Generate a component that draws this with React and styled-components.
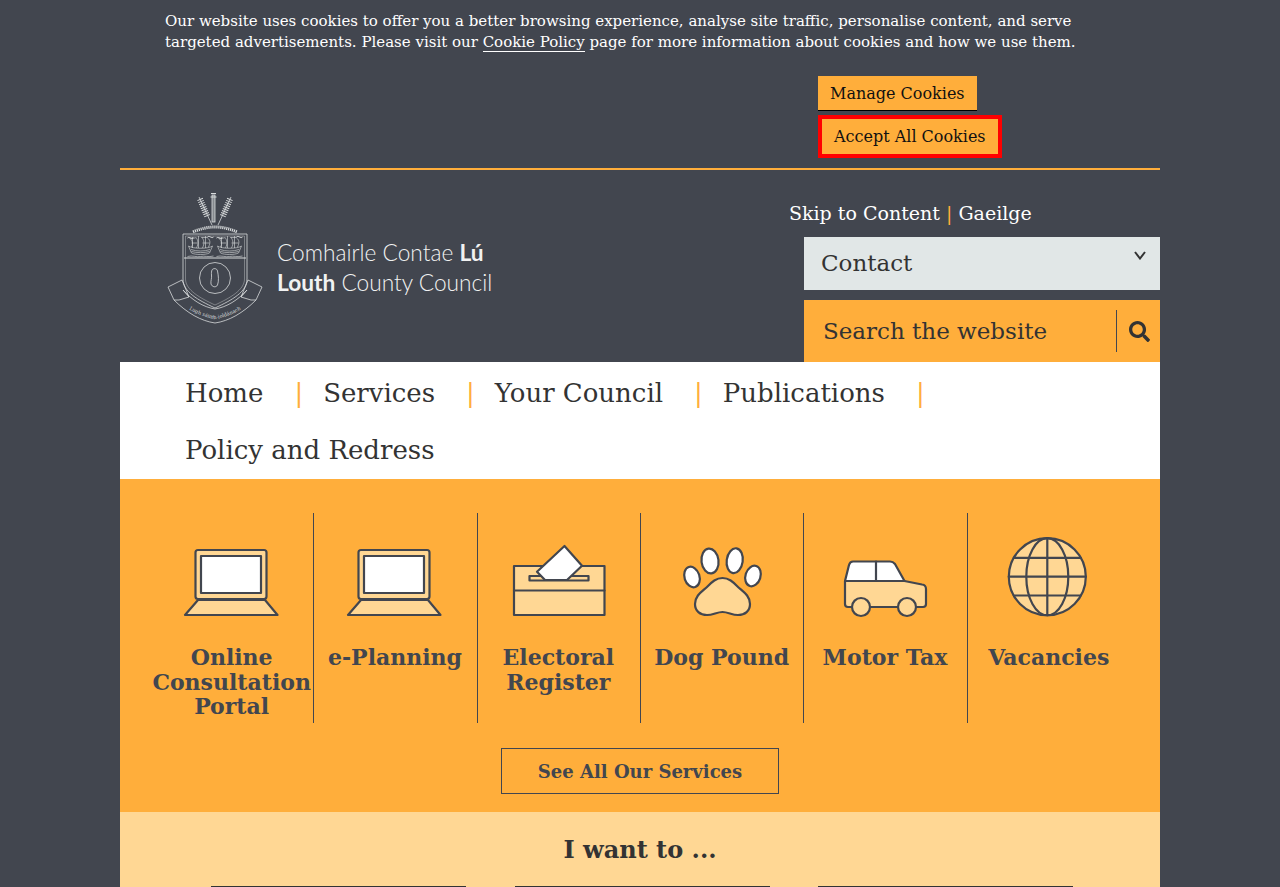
import React from "react";
import styled, { createGlobalStyle } from "styled-components";
import { FaSearch } from "react-icons/fa";

const DARK = "#42464f";
const ORANGE = "#ffae3b";
const LIGHT = "#ffd794";
const INK = "#333333";

const Global = createGlobalStyle`
  html, body { margin: 0; padding: 0; background: ${DARK}; }
  body { font-family: "DejaVu Serif", "Liberation Serif", serif; color: ${INK}; }
  * { box-sizing: border-box; }
`;

const Page = styled.div`
  width: 1040px;
  margin: 0 auto;
  height: 887px;
  overflow: hidden;
`;

const CookieBanner = styled.section`
  height: 170px;
  padding: 11px 0 0 45px;
  border-bottom: 2px solid ${ORANGE};
  color: #ffffff;
  font-size: 15px;
  line-height: 21px;
`;
const CookieText = styled.p`
  width: 925px;
  margin: 0;
`;
const CookieLink = styled.a`
  color: #ffffff;
  border-bottom: 1px solid #ffffff;
`;
const CookieActions = styled.div`
  display: flex;
  flex-direction: column;
  align-items: flex-start;
  gap: 4px;
  margin: 23px 0 0 653px;
`;
const CookieButton = styled.button`
  font-family: inherit;
  font-size: 16px;
  line-height: 19px;
  color: #111111;
  background: ${ORANGE};
  border: 0;
  border-bottom: 1px solid #000000;
  padding: 8px 12px 7px;
`;
const AcceptButton = styled(CookieButton)`
  border: 4px solid #ff0000;
  padding: 8px 12px;
  height: 43px;
`;

const Header = styled.header`
  height: 192px;
  display: flex;
  justify-content: space-between;
`;
const Logo = styled.a`
  display: flex;
  align-items: flex-start;
  padding: 20px 0 0 45px;
  color: #f1f2f2;
`;
const Wordmark = styled.div`
  margin: 48px 0 0 12px;
  font-family: "Lato", "Open Sans", sans-serif;
  font-weight: 300;
  font-size: 22.7px;
  line-height: 29.500px;
  white-space: nowrap;
  b { font-weight: 700; }
`;
const HeaderTools = styled.div`
  width: 371px;
  display: flex;
  flex-direction: column;
`;
const SkipRow = styled.div`
  height: 67px;
  padding-top: 30px;
  font-size: 19px;
  line-height: 26px;
  color: #ffffff;
  white-space: nowrap;
`;
const Pipe = styled.span`
  color: ${ORANGE};
  font-weight: 300;
`;
const ContactSelect = styled.div`
  align-self: flex-end;
  width: 356px;
  height: 53px;
  background: #e1e7e7;
  padding: 0 14px 0 17px;
  display: flex;
  justify-content: space-between;
  font-size: 23px;
  line-height: 53px;
  color: ${INK};
`;
const Caret = styled.svg`
  width: 12px;
  height: 9px;
  margin-top: 14px;
`;
const SearchBar = styled.div`
  align-self: flex-end;
  width: 356px;
  height: 62px;
  margin-top: 10px;
  background: ${ORANGE};
  display: flex;
  align-items: center;
  padding-left: 19px;
  font-size: 23px;
  line-height: 64px;
  color: ${INK};
`;
const SearchPlaceholder = styled.span`
  flex: 1;
`;
const SearchIconBox = styled.span`
  width: 44px;
  height: 42px;
  padding-left: 2px;
  border-left: 1px solid ${DARK};
  display: flex;
  align-items: center;
  justify-content: center;
  color: ${INK};
  font-size: 21px;
`;

const Nav = styled.nav`
  height: 117px;
  background: #ffffff;
  padding: 3px 0 0 65px;
  display: flex;
  flex-wrap: wrap;
  align-content: flex-start;
  font-size: 26px;
  line-height: 57px;
  color: ${INK};
`;
const NavItem = styled.a`
  display: flex;
  white-space: nowrap;
`;
const NavPipe = styled.span`
  color: ${ORANGE};
  margin: 0 20px 0 31px;
`;

const Services = styled.section`
  height: 333px;
  background: ${ORANGE};
  padding: 34px 29px 0 31px;
`;
const ServiceGrid = styled.div`
  display: grid;
  grid-template-columns: repeat(6, minmax(0, 1fr));
`;
const ServiceCard = styled.a`
  height: 210px;
  padding-top: 20px;
  display: flex;
  flex-direction: column;
  align-items: center;
  border-right: ${(p) => (p.$last ? "0" : `1px solid ${DARK}`)};
`;
const ServiceIcon = styled.svg`
  width: 100px;
  height: 90px;
  flex: none;
`;
const ServiceLabel = styled.h3`
  margin: 22px 1px 0 0;
  font-size: 22px;
  line-height: 24.5px;
  font-weight: 700;
  text-align: center;
  color: ${DARK};
`;
const AllServices = styled.a`
  display: block;
  width: 278px;
  height: 46px;
  margin: 25px 0 0 350px;
  border: 1px solid ${DARK};
  text-align: center;
  font-size: 18px;
  font-weight: 700;
  line-height: 45px;
  color: ${DARK};
`;

const Wants = styled.section`
  height: 75px;
  background: ${LIGHT};
  padding-top: 19px;
  text-align: center;
`;
const WantsTitle = styled.h2`
  margin: 0;
  height: 55px;
  font-size: 24px;
  line-height: 38px;
  font-weight: 700;
  color: ${INK};
`;
const WantsRow = styled.div`
  display: flex;
  justify-content: flex-start;
  gap: 48.500px;
  padding-left: 91px;
`;
const WantsCard = styled.div`
  width: 255px;
  height: 1px;
  background: ${INK};
`;

const S = { stroke: DARK, strokeWidth: 2.2, strokeLinejoin: "round", strokeLinecap: "round" };

const Laptop = () => (
  <ServiceIcon viewBox="0 0 100 90">
    <g {...S}>
      <path d="M16 67H83L95.500 82H3Z" fill={LIGHT} />
      <rect x="13.500" y="17" width="71" height="49" rx="2.500" fill={LIGHT} />
      <rect x="19" y="23" width="60" height="37" fill="#fff" />
    </g>
  </ServiceIcon>
);
const Ballot = () => (
  <ServiceIcon viewBox="0 0 100 90">
    <g {...S}>
      <rect x="5" y="33" width="90.500" height="49" fill={LIGHT} />
      <path d="M5 57.500H95.500" />
      <rect x="20.500" y="43" width="59" height="4.500" fill={LIGHT} />
      <path d="M55.500 13L73 32.700L58 47H36L28 38.700Z" fill="#fff" />
    </g>
  </ServiceIcon>
);
const Paw = () => (
  <ServiceIcon viewBox="0 0 100 90">
    <g {...S}>
      <ellipse cx="20" cy="44" rx="7.500" ry="10.500" transform="rotate(-18 20 44)" fill="#fff" />
      <ellipse cx="38" cy="28" rx="8.500" ry="12.500" transform="rotate(-7 38 28)" fill="#fff" />
      <ellipse cx="62.700" cy="27.700" rx="8" ry="12.500" transform="rotate(8 62.700 27.700)" fill="#fff" />
      <ellipse cx="81" cy="43" rx="7.500" ry="10.500" transform="rotate(18 81 43)" fill="#fff" />
      <path d="M50.500 45C44 45 40 49 36 53C31 58 23 62 23 71C23 78 28 82 35 82C41 82 45 79 50.500 79C56 79 60 82 66 82C73 82 78 78 78 71C78 62 70 58 65 53C61 49 57 45 50.500 45Z" fill={LIGHT} />
    </g>
  </ServiceIcon>
);
const Car = () => (
  <ServiceIcon viewBox="0 0 100 90">
    <g {...S}>
      <path d="M10 48V71Q10 74 13 74H88Q91 74 91 71V56Q91 52 87 51.500L69.500 48Z" fill={LIGHT} />
      <path d="M10 48L14 32Q15 28.500 18 28.500H55Q58 28.500 60 31L69.500 48Z" fill="#fff" />
      <path d="M41 28.500V48" />
      <circle cx="26" cy="74" r="9" fill={LIGHT} />
      <circle cx="72" cy="74" r="9" fill={LIGHT} />
    </g>
  </ServiceIcon>
);
const Globe = () => (
  <ServiceIcon viewBox="0 0 100 90">
    <g {...S}>
      <circle cx="48.300" cy="43.700" r="38.500" fill={LIGHT} />
      <ellipse cx="48.300" cy="43.700" rx="21" ry="38.500" fill="none" />
      <path d="M48.300 5.200V82.200M9.800 43.700H86.800M14.800 24.900H81.800M14.800 62.500H81.800" fill="none" />
    </g>
  </ServiceIcon>
);

const Ship = ({ x }) => (
  <g transform={`translate(${x} 0)`} strokeWidth=".6">
    <path d="M-12 246C-8 249 8 249 12 246L9 253C5 255 -5 255 -9 253Z" />
    <path d="M-9.500 249.500C-4 251.500 4 251.500 9.500 249.500M-9 251.500C-4 253 4 253 9 251.500" />
    <path d="M-11 238C-8 240 -7 244 -9 247M-5 237C-2 240 -2 244 -4 248M1 237C4 240 4 244 2 248M7 238C10 240 10 243 8 247" />
    <path d="M-11 238H-5M1 237.500H7M-8 237V248M-2 236V248M5 236V248M-9 243H-3M2 243H9" />
    <path d="M-13 256.500C-8 255 -4 257.500 0 256.500C4 255.500 8 257.500 13 256" />
    <path d="M-13 238C-11 236 -9 240 -7 238M7 237C9 235 11 239 13 237" strokeWidth="1" />
  </g>
);

const Crest = () => (
  <svg width="100" height="136" viewBox="165 190 100 136" fill="none" stroke="#d8dbdc" strokeWidth="0.8">
    <rect x="212" y="195" width="3" height="27" fill="#d8dbdc" fillOpacity=".45" />
    <path d="M210.500 197H216.500M211 193.500H216" strokeWidth="1.200" />
    <path d="M199 197L212 225M231 197L218 225" />
    <path d="M200 199L207.500 217M230 199L222.500 217" strokeWidth="6" strokeDasharray="1 1.200" />
    <path d="M193 232Q215 222 237 232" strokeWidth="3" strokeDasharray="1.200 .8" />
    <path d="M183 234H247V279C247 292 232 300 215 308C198 300 183 292 183 279Z" />
    <path d="M185.500 236H244.500V279C244.500 290 230 298 215 305C200 298 185.500 290 185.500 279Z" strokeWidth=".4" />
    <path d="M184 258H246" strokeWidth="1" />
    <Ship x={200.500} />
    <Ship x={229.500} />
    <circle cx="215" cy="278" r="15.500" />
    <path d="M212 270C213 268 217 268 217.500 271C218.500 276 219 281 217.500 285C216 288 212 287 211 284C210.500 281 212 278 211.500 275C211.300 273 211.500 271 212 270Z" />
    <path id="crest-motto-path" d="M177 301C190 311 202 317 215 319C228 317 240 311 253 301" stroke="none" />
    <path d="M183 290C192 300 203 307 215 309C227 307 238 300 247 290M174 300C187 313 201 321 215 323C229 321 243 313 256 300" />
    <path d="M183 290L189 297L179 300L174 300L168 287L182 280L189 297M247 290L241 297L251 300L256 300L262 287L248 280L241 297" />
    <text fontFamily="'DejaVu Serif', serif" fontSize="5" fill="#d8dbdc" stroke="none">
      <textPath href="#crest-motto-path" startOffset="50%" textAnchor="middle">Lugh sáimh-ioldánach</textPath>
    </text>
  </svg>
);

const services = [
  { label: <>Online<br />Consultation<br />Portal</>, Icon: Laptop },
  { label: "e-Planning", Icon: Laptop },
  { label: <>Electoral<br />Register</>, Icon: Ballot },
  { label: "Dog Pound", Icon: Paw },
  { label: "Motor Tax", Icon: Car },
  { label: "Vacancies", Icon: Globe },
];
const navItems = ["Home", "Services", "Your Council", "Publications"];

export default function App() {
  return (
    <Page>
      <Global />
      <CookieBanner>
        <CookieText>
          Our website uses cookies to offer you a better browsing experience, analyse site traffic, personalise content, and serve targeted advertisements. Please visit our <CookieLink>Cookie Policy</CookieLink> page for more information about cookies and how we use them.
        </CookieText>
        <CookieActions>
          <CookieButton>Manage Cookies</CookieButton>
          <AcceptButton>Accept All Cookies</AcceptButton>
        </CookieActions>
      </CookieBanner>
      <Header>
        <Logo>
          <Crest />
          <Wordmark>
            Comhairle Contae <b>Lú</b>
            <br />
            <b>Louth</b> County Council
          </Wordmark>
        </Logo>
        <HeaderTools>
          <SkipRow>
            Skip to Content <Pipe>|</Pipe> Gaeilge
          </SkipRow>
          <ContactSelect>
            Contact
            <Caret viewBox="0 0 12 9" fill="none" stroke={INK} strokeWidth="2">
              <path d="M1 1L6 7.500L11 1" />
            </Caret>
          </ContactSelect>
          <SearchBar>
            <SearchPlaceholder>Search the website</SearchPlaceholder>
            <SearchIconBox>
              <FaSearch />
            </SearchIconBox>
          </SearchBar>
        </HeaderTools>
      </Header>
      <Nav>
        {navItems.map((item) => (
          <NavItem key={item}>
            {item}
            <NavPipe>|</NavPipe>
          </NavItem>
        ))}
        <NavItem>Policy and Redress</NavItem>
      </Nav>
      <Services>
        <ServiceGrid>
          {services.map(({ label, Icon }, i) => (
            <ServiceCard key={i} $last={i === services.length - 1}>
              <Icon />
              <ServiceLabel>{label}</ServiceLabel>
            </ServiceCard>
          ))}
        </ServiceGrid>
        <AllServices>See All Our Services</AllServices>
      </Services>
      <Wants>
        <WantsTitle>I want to ...</WantsTitle>
        <WantsRow>
          <WantsCard />
          <WantsCard />
          <WantsCard />
        </WantsRow>
      </Wants>
    </Page>
  );
}
